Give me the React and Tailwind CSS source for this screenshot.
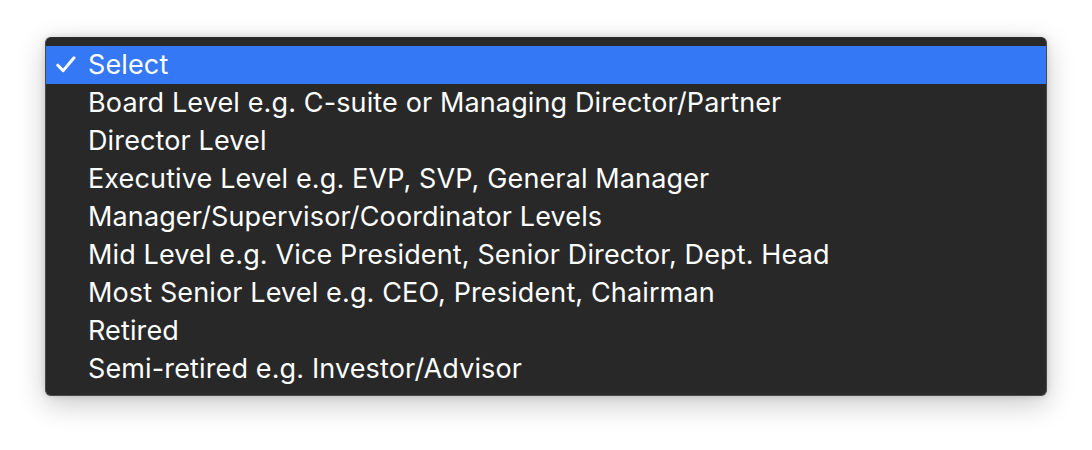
const items = [
  'Select',
  'Board Level e.g. C-suite or Managing Director/Partner',
  'Director Level',
  'Executive Level e.g. EVP, SVP, General Manager',
  'Manager/Supervisor/Coordinator Levels',
  'Mid Level e.g. Vice President, Senior Director, Dept. Head',
  'Most Senior Level e.g. CEO, President, Chairman',
  'Retired',
  'Semi-retired e.g. Investor/Advisor',
];

export default function App() {
  return (
    <div className="bg-white h-[450px] w-[1092px] pt-[37px] pl-[45px]">
      <div
        className="w-[1002px] h-[359px] rounded-[6px] bg-[#282828] border border-[#4a4a4a] border-t-[#2e2e2e] pt-[8px] pb-[7px] shadow-[0_8px_28px_rgba(0,0,0,0.22),0_0_6px_rgba(0,0,0,0.14)] overflow-hidden"
        style={{ fontFamily: 'Inter, sans-serif' }}
      >
        {items.map((t, i) => (
          <div
            key={t}
            className={`relative h-[38px] flex items-center pl-[42px] text-[27px] leading-[38px] tracking-[0.13px] font-normal text-white ${i === 0 ? 'bg-[#3478f6]' : ''}`}
          >
            {i === 0 && (
              <svg
                className="absolute left-[10px] top-[10px]"
                width="20"
                height="18"
                viewBox="0 0 20 18"
                fill="none"
              >
                <polyline
                  points="1.8,9.2 7.2,14.6 18,1.8"
                  stroke="white"
                  strokeWidth="3"
                  strokeLinecap="round"
                  strokeLinejoin="round"
                />
              </svg>
            )}
            <span>{t}</span>
          </div>
        ))}
      </div>
    </div>
  );
}
